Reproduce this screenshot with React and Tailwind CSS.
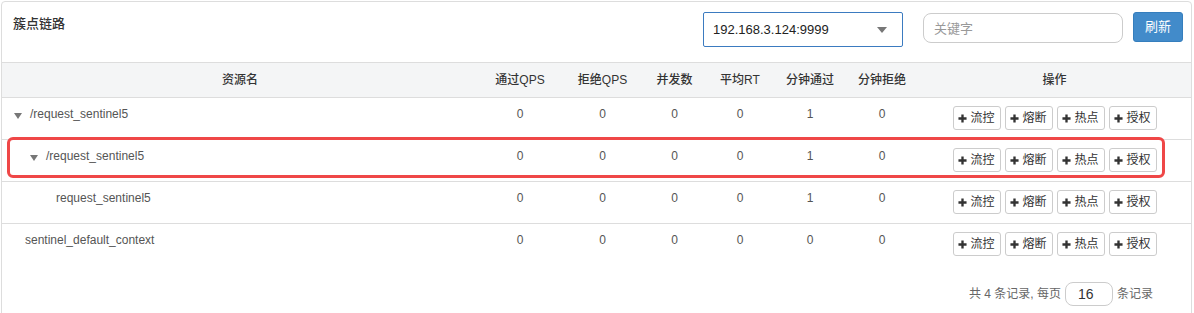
import { useState } from 'react';

const rows = [
  { name: '/request_sentinel5', pad: 'pl-[12px]', toggle: true, passQps: 0, blockQps: 0, threads: 0, rt: 0, passMin: 1, blockMin: 0 },
  { name: '/request_sentinel5', pad: 'pl-[28px]', toggle: true, passQps: 0, blockQps: 0, threads: 0, rt: 0, passMin: 1, blockMin: 0 },
  { name: 'request_sentinel5', pad: 'pl-[54px]', toggle: false, passQps: 0, blockQps: 0, threads: 0, rt: 0, passMin: 1, blockMin: 0 },
  { name: 'sentinel_default_context', pad: 'pl-[23px]', toggle: false, passQps: 0, blockQps: 0, threads: 0, rt: 0, passMin: 0, blockMin: 0 },
];

const actions = ['流控', '熔断', '热点', '授权'];

function Plus() {
  return (
    <svg width="9" height="9" viewBox="0 0 10 10" className="shrink-0">
      <path d="M5 0.5v9M0.5 5h9" stroke="#333" strokeWidth="2.6" />
    </svg>
  );
}

function ActionButton({ label }) {
  return (
    <button className="flex h-[24px] w-[48px] items-center justify-center gap-[3px] rounded-[3px] border border-[#ccc] bg-white text-[12px] text-[#333]">
      <Plus />
      <span>{label}</span>
    </button>
  );
}

export default function App() {
  const [keyword, setKeyword] = useState('');
  const [pageSize, setPageSize] = useState('16');

  return (
    <div
      className="relative h-[313px] w-[1194px] overflow-hidden bg-white pl-[1px] pt-[1px] text-[#333]"
      style={{ fontFamily: '"Liberation Sans", "Noto Sans CJK SC", sans-serif' }}
    >
      <div className="h-[330px] w-[1191px] rounded-[4px] border border-[#ddd]">
        {/* header bar */}
        <div className="flex h-[60px] items-start">
          <h3 className="pl-[11px] pt-[12px] text-[13px] font-medium leading-[20px] text-[#333]">簇点链路</h3>
          <div className="ml-auto mt-[10px] flex h-[35px] w-[200px] items-center justify-between rounded-[2px] border border-[#3b7bc0] px-[9px] text-[13px] text-[#222]">
            <span>192.168.3.124:9999</span>
            <svg width="10" height="6" viewBox="0 0 10 6" className="mr-[6px]">
              <path d="M0 0h10L5 6z" fill="#777" />
            </svg>
          </div>
          <input
            value={keyword}
            onChange={(e) => setKeyword(e.target.value)}
            placeholder="关键字"
            className="ml-[20px] mt-[11px] h-[30px] w-[200px] rounded-[8px] border border-[#ccc] px-[10px] text-[13px] outline-none placeholder:text-[#999]"
          />
          <button className="ml-[10px] mr-[8px] mt-[10px] h-[30px] w-[50px] rounded-[3px] border border-[#357ebd] bg-[#428bca] text-[13px] text-white">
            刷新
          </button>
        </div>

        {/* table */}
        <table className="w-[1189px] table-fixed border-collapse text-[12px]">
          <colgroup>
            <col className="w-[476px]" />
            <col className="w-[84px]" />
            <col className="w-[81px]" />
            <col className="w-[63px]" />
            <col className="w-[68px]" />
            <col className="w-[72px]" />
            <col className="w-[72px]" />
            <col className="w-[273px]" />
          </colgroup>
          <thead>
            <tr className="h-[35px] border-y border-[#ddd] bg-[#f4f5f6] text-[12px] text-[#333]">
              <th className="font-medium">资源名</th>
              <th className="font-medium">通过QPS</th>
              <th className="font-medium">拒绝QPS</th>
              <th className="font-medium">并发数</th>
              <th className="font-medium">平均RT</th>
              <th className="font-medium">分钟通过</th>
              <th className="font-medium">分钟拒绝</th>
              <th className="font-medium">操作</th>
            </tr>
          </thead>
          <tbody>
            {rows.map((r, i) => (
              <tr key={i} className={`h-[42px] align-top text-[#555] ${i > 0 ? 'border-t border-[#ddd]' : ''}`}>
                <td className={`pt-[8px] leading-[17px] ${r.pad}`}>
                  <div className="flex items-center">
                    {r.toggle && (
                      <svg width="8" height="6" viewBox="0 0 8 6" className="mr-[8px] mt-[2px]">
                        <path d="M0 0h8L4 6z" fill="#777" />
                      </svg>
                    )}
                    <span>{r.name}</span>
                  </div>
                </td>
                <td className="pt-[8px] text-center leading-[17px]">{r.passQps}</td>
                <td className="pt-[8px] text-center leading-[17px]">{r.blockQps}</td>
                <td className="pt-[8px] text-center leading-[17px]">{r.threads}</td>
                <td className="pt-[8px] text-center leading-[17px]">{r.rt}</td>
                <td className="pt-[8px] text-center leading-[17px]">{r.passMin}</td>
                <td className="pt-[8px] text-center leading-[17px]">{r.blockMin}</td>
                <td className="pt-[8px]">
                  <div className="flex justify-center gap-[4px]">
                    {actions.map((a) => (
                      <ActionButton key={a} label={a} />
                    ))}
                  </div>
                </td>
              </tr>
            ))}
          </tbody>
        </table>

        {/* pagination */}
        <div className="mt-[16px] flex items-center justify-end pr-[38px] text-[12px] text-[#666]">
          <span>共 4 条记录, 每页</span>
          <input
            value={pageSize}
            onChange={(e) => setPageSize(e.target.value)}
            className="mx-[4px] h-[24px] w-[48px] rounded-[8px] border border-[#ccc] px-[12px] text-[14px] text-[#333] outline-none"
          />
          <span>条记录</span>
        </div>
      </div>

      {/* highlight annotation */}
      <div className="pointer-events-none absolute left-[7px] top-[137px] h-[41px] w-[1158px] rounded-[6px] border-[3px] border-[#ef4747]" />
    </div>
  );
}
